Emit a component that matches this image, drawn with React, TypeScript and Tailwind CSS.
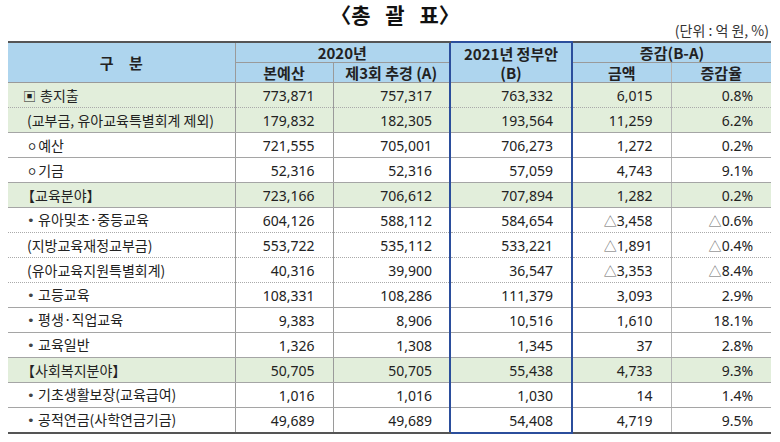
import React from "react";

type Row = {
  label: string;
  v: string[];
  green?: boolean;
  dotted?: boolean;
};

const rows: Row[] = [
  { label: "▣ 총지출", v: ["773,871", "757,317", "763,332", "6,015", "0.8%"], green: true, dotted: true },
  { label: "(교부금, 유아교육특별회계 제외)", v: ["179,832", "182,305", "193,564", "11,259", "6.2%"], green: true },
  { label: "ㅇ예산", v: ["721,555", "705,001", "706,273", "1,272", "0.2%"] },
  { label: "ㅇ기금", v: ["52,316", "52,316", "57,059", "4,743", "9.1%"] },
  { label: "【교육분야】", v: ["723,166", "706,612", "707,894", "1,282", "0.2%"], green: true },
  { label: "• 유아및초·중등교육", v: ["604,126", "588,112", "584,654", "△3,458", "△0.6%"], dotted: true },
  { label: "(지방교육재정교부금)", v: ["553,722", "535,112", "533,221", "△1,891", "△0.4%"], dotted: true },
  { label: "(유아교육지원특별회계)", v: ["40,316", "39,900", "36,547", "△3,353", "△8.4%"], dotted: true },
  { label: "• 고등교육", v: ["108,331", "108,286", "111,379", "3,093", "2.9%"] },
  { label: "• 평생·직업교육", v: ["9,383", "8,906", "10,516", "1,610", "18.1%"] },
  { label: "• 교육일반", v: ["1,326", "1,308", "1,345", "37", "2.8%"] },
  { label: "【사회복지분야】", v: ["50,705", "50,705", "55,438", "4,733", "9.3%"], green: true },
  { label: "• 기초생활보장(교육급여)", v: ["1,016", "1,016", "1,030", "14", "1.4%"] },
  { label: "• 공적연금(사학연금기금)", v: ["49,689", "49,689", "54,408", "4,719", "9.5%"] },
];

function Num({ s }: { s: string }) {
  if (s.startsWith("△")) {
    return (
      <span>
        <span className="text-[13px] text-[#666] font-['Noto_Sans_CJK_KR',sans-serif]">△</span>
        {s.slice(1)}
      </span>
    );
  }
  return <span>{s}</span>;
}

function Label({ s }: { s: string }) {
  if (s.startsWith("• ")) {
    return (
      <span>
        <span className="inline-block w-[11px] text-[13px] text-[#444] font-['DejaVu_Sans',sans-serif]">•</span>
        {s.slice(2)}
      </span>
    );
  }
  if (s.startsWith("ㅇ")) {
    return (
      <span>
        <span className="text-[11px] mr-[1px]">ㅇ</span>
        {s.slice(1)}
      </span>
    );
  }
  if (s.startsWith("▣ ")) {
    return (
      <span>
        <span className="-ml-[4px] mr-[4px] text-[13px]">▣</span>
        {s.slice(2)}
      </span>
    );
  }
  if (s.startsWith("【")) {
    return <span className="-ml-[6px]">{s}</span>;
  }
  return <span>{s}</span>;
}

export default function App() {
  const font = "font-['Noto_Sans','Noto_Sans_CJK_KR',sans-serif]";
  const hd = "bg-[#aed5ee] p-0 font-bold";
  return (
    <div className={`w-[780px] h-[442px] bg-white text-[#222] ${font}`}>
      <div className="h-[24px] leading-[28px] text-center pl-[10px] text-[21px] font-bold text-[#111] font-['Noto_Sans_CJK_KR',sans-serif] [word-spacing:10px]">
        〈총 괄 표〉
      </div>
      <div className="h-[17px] leading-[12px] text-right pr-[11px] text-[14px] text-[#333] font-['Noto_Sans_CJK_KR',sans-serif]">
        (단위 : 억 원, %)
      </div>
      <table className="ml-[8px] w-[763px] table-fixed border-collapse text-[14px]">
        <colgroup>
          <col className="w-[227px]" />
          <col className="w-[98px]" />
          <col className="w-[117px]" />
          <col className="w-[122px]" />
          <col className="w-[99px]" />
          <col className="w-[100px]" />
        </colgroup>
        <thead className="font-['Noto_Sans_CJK_KR',sans-serif] text-[15px] text-[#222]">
          <tr>
            <th rowSpan={2} className={`${hd} border-t-2 border-t-[#555] border-r border-r-[#9a9a9a] border-b border-b-[#9a9a9a]`}>
              <div className="leading-[20px] [word-spacing:12px]">구 분</div>
            </th>
            <th colSpan={2} className={`${hd} border-t-2 border-t-[#555] border-b border-b-[#9a9a9a]`}>
              <div className="h-[19px] leading-[20px]">2020년</div>
            </th>
            <th rowSpan={2} className={`${hd} border-t-2 border-t-[#2b4e9c] border-x-2 border-x-[#2b4e9c] border-b border-b-[#9a9a9a]`}>
              <div className="leading-[19px]">
                2021년 정부안
                <br />
                (B)
              </div>
            </th>
            <th colSpan={2} className={`${hd} border-t-2 border-t-[#555] border-b border-b-[#9a9a9a]`}>
              <div className="h-[19px] leading-[20px]">증감(B-A)</div>
            </th>
          </tr>
          <tr>
            <th className={`${hd} border-r border-r-[#9a9a9a] border-b border-b-[#9a9a9a]`}>
              <div className="h-[19px] leading-[19px]">본예산</div>
            </th>
            <th className={`${hd} border-b border-b-[#9a9a9a]`}>
              <div className="h-[19px] leading-[19px]">제3회 추경 (A)</div>
            </th>
            <th className={`${hd} border-r border-r-[#b5b5b5] border-b border-b-[#9a9a9a]`}>
              <div className="h-[19px] leading-[19px]">금액</div>
            </th>
            <th className={`${hd} border-b border-b-[#9a9a9a]`}>
              <div className="h-[19px] leading-[19px]">증감율</div>
            </th>
          </tr>
        </thead>
        <tbody>
          {rows.map((r, i) => {
            const last = i === rows.length - 1;
            const bg = r.green ? "bg-[#e2eedb]" : "bg-white";
            const bb = last
              ? "border-b-2 border-b-[#555]"
              : r.dotted
              ? "border-b border-b-[#aaa] [border-bottom-style:dotted]"
              : "border-b border-b-[#a5a5a5]";
            const bbBlue = last ? "border-b-2 border-b-[#2b4e9c]" : bb;
            const cell = "h-[24px] flex items-center justify-end whitespace-nowrap";
            return (
              <tr key={i}>
                <td className={`${bg} ${bb} border-r border-r-[#9a9a9a] p-0`}>
                  <div className="h-[24px] flex items-center pl-[19px] whitespace-nowrap font-['Noto_Sans_CJK_KR',sans-serif] text-[14px] text-[#222]">
                    <Label s={r.label} />
                  </div>
                </td>
                <td className={`${bg} ${bb} border-r border-r-[#9a9a9a] p-0`}>
                  <div className={`${cell} pr-[18px]`}>
                    <Num s={r.v[0]} />
                  </div>
                </td>
                <td className={`${bg} ${bb} p-0`}>
                  <div className={`${cell} pr-[17px]`}>
                    <Num s={r.v[1]} />
                  </div>
                </td>
                <td className={`${bg} ${bbBlue} border-x-2 border-x-[#2b4e9c] p-0`}>
                  <div className={`${cell} pr-[18px]`}>
                    <Num s={r.v[2]} />
                  </div>
                </td>
                <td className={`${bg} ${bb} border-r border-r-[#b5b5b5] p-0`}>
                  <div className={`${cell} pr-[18px]`}>
                    <Num s={r.v[3]} />
                  </div>
                </td>
                <td className={`${bg} ${bb} p-0`}>
                  <div className={`${cell} pr-[18px]`}>
                    <Num s={r.v[4]} />
                  </div>
                </td>
              </tr>
            );
          })}
        </tbody>
      </table>
    </div>
  );
}
